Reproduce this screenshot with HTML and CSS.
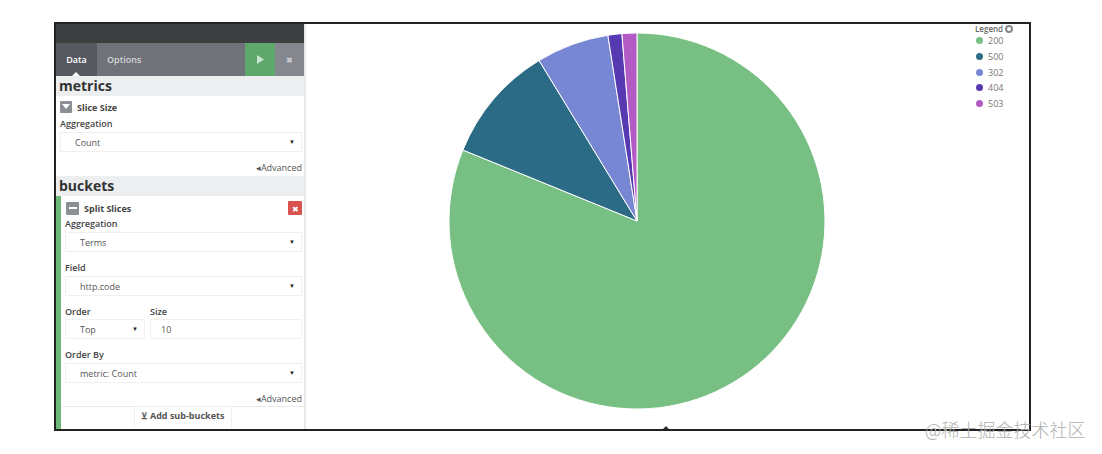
FILE: index.html
```html
<!DOCTYPE html>
<html lang="en">
<head>
    <meta charset="UTF-8">
    <title>Pie chart</title>
    <link rel="stylesheet" href="styles.css">
</head>
<body>
    <div class="frame">
        <div class="sidebar">
            <div class="topbar"></div>
            <div class="tabs">
                <div class="tab active">Data</div>
                <div class="tab">Options</div>
                <div class="spacer"></div>
                <div class="btn-apply"><svg width="9" height="9" viewBox="0 0 9 9"><path d="M1 0 L8 4.5 L1 9 Z" fill="#c9e6cf"/></svg></div>
                <div class="btn-discard">&#10006;</div>
            </div>

            <div class="section-title">metrics</div>
            <div class="agg">
                <div class="agg-head">
                    <span class="toggle"><svg width="8" height="6" viewBox="0 0 8 6"><path d="M0 0 H8 L4 5 Z" fill="#fff"/></svg></span>
                    <span class="agg-name">Slice Size</span>
                </div>
                <div class="label">Aggregation</div>
                <div class="select"><span>Count</span><span class="caret">&#9660;</span></div>
                <div class="advanced">&#9666;Advanced</div>
            </div>

            <div class="section-title">buckets</div>
            <div class="agg bucket">
                <div class="agg-head">
                    <span class="toggle"><svg width="8" height="4" viewBox="0 0 8 4"><rect x="0" y="1" width="8" height="2" fill="#fff"/></svg></span>
                    <span class="agg-name">Split Slices</span>
                    <span class="remove">&#10006;</span>
                </div>
                <div class="label">Aggregation</div>
                <div class="select"><span>Terms</span><span class="caret">&#9660;</span></div>

                <div class="label gap">Field</div>
                <div class="select"><span>http.code</span><span class="caret">&#9660;</span></div>

                <div class="pair gap">
                    <div class="col-order">
                        <div class="label">Order</div>
                        <div class="select"><span>Top</span><span class="caret">&#9660;</span></div>
                    </div>
                    <div class="col-size">
                        <div class="label">Size</div>
                        <div class="select input"><span>10</span></div>
                    </div>
                </div>

                <div class="label gap">Order By</div>
                <div class="select"><span>metric: Count</span><span class="caret">&#9660;</span></div>

                <div class="advanced">&#9666;Advanced</div>
                <div class="sub-row">
                    <div class="line"></div>
                    <div class="add-sub">&#8891; Add sub-buckets</div>
                    <div class="line"></div>
                </div>
            </div>
        </div>

        <div class="chart">
            <svg class="pie" width="722" height="404" viewBox="0 0 722 404">
                <g stroke="#fff" stroke-width="1">
                    <path d="M331,197 L331,9 A188,188 0 1 1 156.9,126 Z" fill="#77bf82"/>
                    <path d="M331,197 L156.9,126 A188,188 0 0 1 233.1,36.5 Z" fill="#2c6b85"/>
                    <path d="M331,197 L233.1,36.5 A188,188 0 0 1 301.9,11.3 Z" fill="#7887d4"/>
                    <path d="M331,197 L301.9,11.3 A188,188 0 0 1 315.9,9.6 Z" fill="#5739b2"/>
                    <path d="M331,197 L315.9,9.6 A188,188 0 0 1 331,9 Z" fill="#b35bc5"/>
                </g>
            </svg>
            <div class="legend">
                <div class="legend-title">Legend <span class="legend-icon"></span></div>
                <div class="legend-item"><span class="dot" style="background:#77bf82"></span>200</div>
                <div class="legend-item"><span class="dot" style="background:#2c6b85"></span>500</div>
                <div class="legend-item"><span class="dot" style="background:#7887d4"></span>302</div>
                <div class="legend-item"><span class="dot" style="background:#5739b2"></span>404</div>
                <div class="legend-item"><span class="dot" style="background:#b35bc5"></span>503</div>
            </div>
            <div class="collapse"></div>
        </div>
    </div>
    <div class="watermark">@稀土掘金技术社区</div>
</body>
</html>
```

FILE: styles.css
```css
body {
    margin: 0;
    background: #fff;
    font-family: "Open Sans", Arial, sans-serif;
    color: #444;
}
.frame {
    box-sizing: border-box;
    width: 977px;
    height: 409px;
    margin: 22px 0 0 54px;
    border: 2px solid #222;
    display: flex;
}
.sidebar {
    width: 248px;
    border-right: 2px solid #e6e7e8;
    background: #fff;
    display: flex;
    flex-direction: column;
}
.topbar {
    height: 19px;
    background: #3e3f41;
}
.tabs {
    height: 33px;
    background: #6f7278;
    display: flex;
    align-items: stretch;
    font-size: 9px;
    font-weight: 600;
}
.tab {
    display: flex;
    align-items: center;
    padding: 0 10px;
    color: #d4d6d9;
    position: relative;
}
.tab.active {
    width: 41px;
    box-sizing: border-box;
    background: #55585e;
    color: #fff;
    justify-content: center;
    padding: 0;
}
.tab.active::after {
    content: "";
    position: absolute;
    bottom: 0;
    left: 16px;
    border: 4px solid transparent;
    border-bottom-color: #fff;
    border-top: none;
}
.spacer {
    flex: 1;
}
.btn-apply {
    width: 30px;
    background: #5ea86c;
    display: flex;
    align-items: center;
    justify-content: center;
}
.btn-discard {
    width: 29px;
    background: #84878d;
    color: #c8cacd;
    font-size: 8px;
    display: flex;
    align-items: center;
    justify-content: center;
}
.section-title {
    height: 20px;
    line-height: 20px;
    background: #eceef0;
    font-size: 14px;
    font-weight: 700;
    color: #333;
    padding-left: 3px;
}
.agg {
    padding: 3px 2px 2px 4px;
}
.agg-head {
    display: flex;
    align-items: center;
    height: 16px;
    margin-bottom: 3px;
}
.toggle {
    width: 12px;
    height: 12px;
    background: #8c8f93;
    border-radius: 1px;
    display: flex;
    align-items: center;
    justify-content: center;
    margin-right: 5px;
}
.agg-name {
    font-size: 9px;
    font-weight: 700;
    color: #444;
    flex: 1;
}
.remove {
    width: 14px;
    height: 14px;
    background: #d9534f;
    color: #fff;
    font-size: 8px;
    border-radius: 1px;
    display: flex;
    align-items: center;
    justify-content: center;
}
.label {
    font-size: 9px;
    font-weight: 600;
    line-height: 12px;
    height: 12px;
    margin-bottom: 2px;
    color: #444;
}
.label.gap, .pair.gap {
    margin-top: 10px;
}
.select {
    box-sizing: border-box;
    height: 20px;
    border: 1px solid #f0f0f0;
    display: flex;
    align-items: center;
    justify-content: space-between;
    padding: 0 6px 0 14px;
    font-size: 9px;
    color: #555;
}
.caret {
    font-size: 6px;
    color: #222;
}
.input {
    padding-left: 10px;
}
.advanced {
    text-align: right;
    font-size: 9px;
    color: #555;
    line-height: 12px;
    margin-top: 10px;
}
.bucket {
    border-left: 5px solid #6cb97a;
    padding-left: 4px;
    padding-bottom: 0;
    flex: 1;
    display: flex;
    flex-direction: column;
}
.bucket .agg-head {
    height: 18px;
    margin-bottom: 1px;
    padding-left: 1px;
}
.bucket .toggle {
    width: 13px;
    height: 13px;
}
.pair {
    display: flex;
    gap: 5px;
}
.col-order {
    width: 80px;
}
.col-size {
    flex: 1;
}
.col-size .label, .col-order .label {
    margin-bottom: 1px;
}
.sub-row {
    display: flex;
    margin-top: 1px;
    height: 22px;
    margin-left: -4px;
    margin-right: -2px;
}
.line {
    flex: 1;
    border-top: 1px solid #ebebeb;
}
.add-sub {
    width: 98px;
    box-sizing: border-box;
    border: 1px solid #f0f0f0;
    border-bottom: none;
    font-size: 9px;
    font-weight: 700;
    color: #555;
    text-align: center;
    line-height: 18px;
}
.chart {
    flex: 1;
    position: relative;
}
.pie {
    display: block;
}
.legend {
    position: absolute;
    top: 0;
    left: 669px;
    font-size: 9px;
    color: #777;
}
.legend-title {
    font-size: 8px;
    font-weight: 600;
    color: #666;
    height: 9px;
    line-height: 10px;
}
.legend-icon {
    display: inline-block;
    width: 4px;
    height: 4px;
    border: 2px solid #888;
    border-radius: 50%;
    vertical-align: -1px;
}
.legend-item {
    display: flex;
    align-items: center;
    height: 15.7px;
    padding-left: 1px;
}
.dot {
    width: 7px;
    height: 7px;
    border-radius: 50%;
    margin-right: 5px;
}
.collapse {
    position: absolute;
    bottom: 0;
    left: 357px;
    border: 3px solid transparent;
    border-bottom: 3px solid #333;
    border-top: none;
}
.watermark {
    position: absolute;
    left: 925px;
    top: 416px;
    font-family: "Noto Sans CJK SC", sans-serif;
    font-size: 18px;
    color: #b0b0b0;
    font-weight: 300;
}
```
